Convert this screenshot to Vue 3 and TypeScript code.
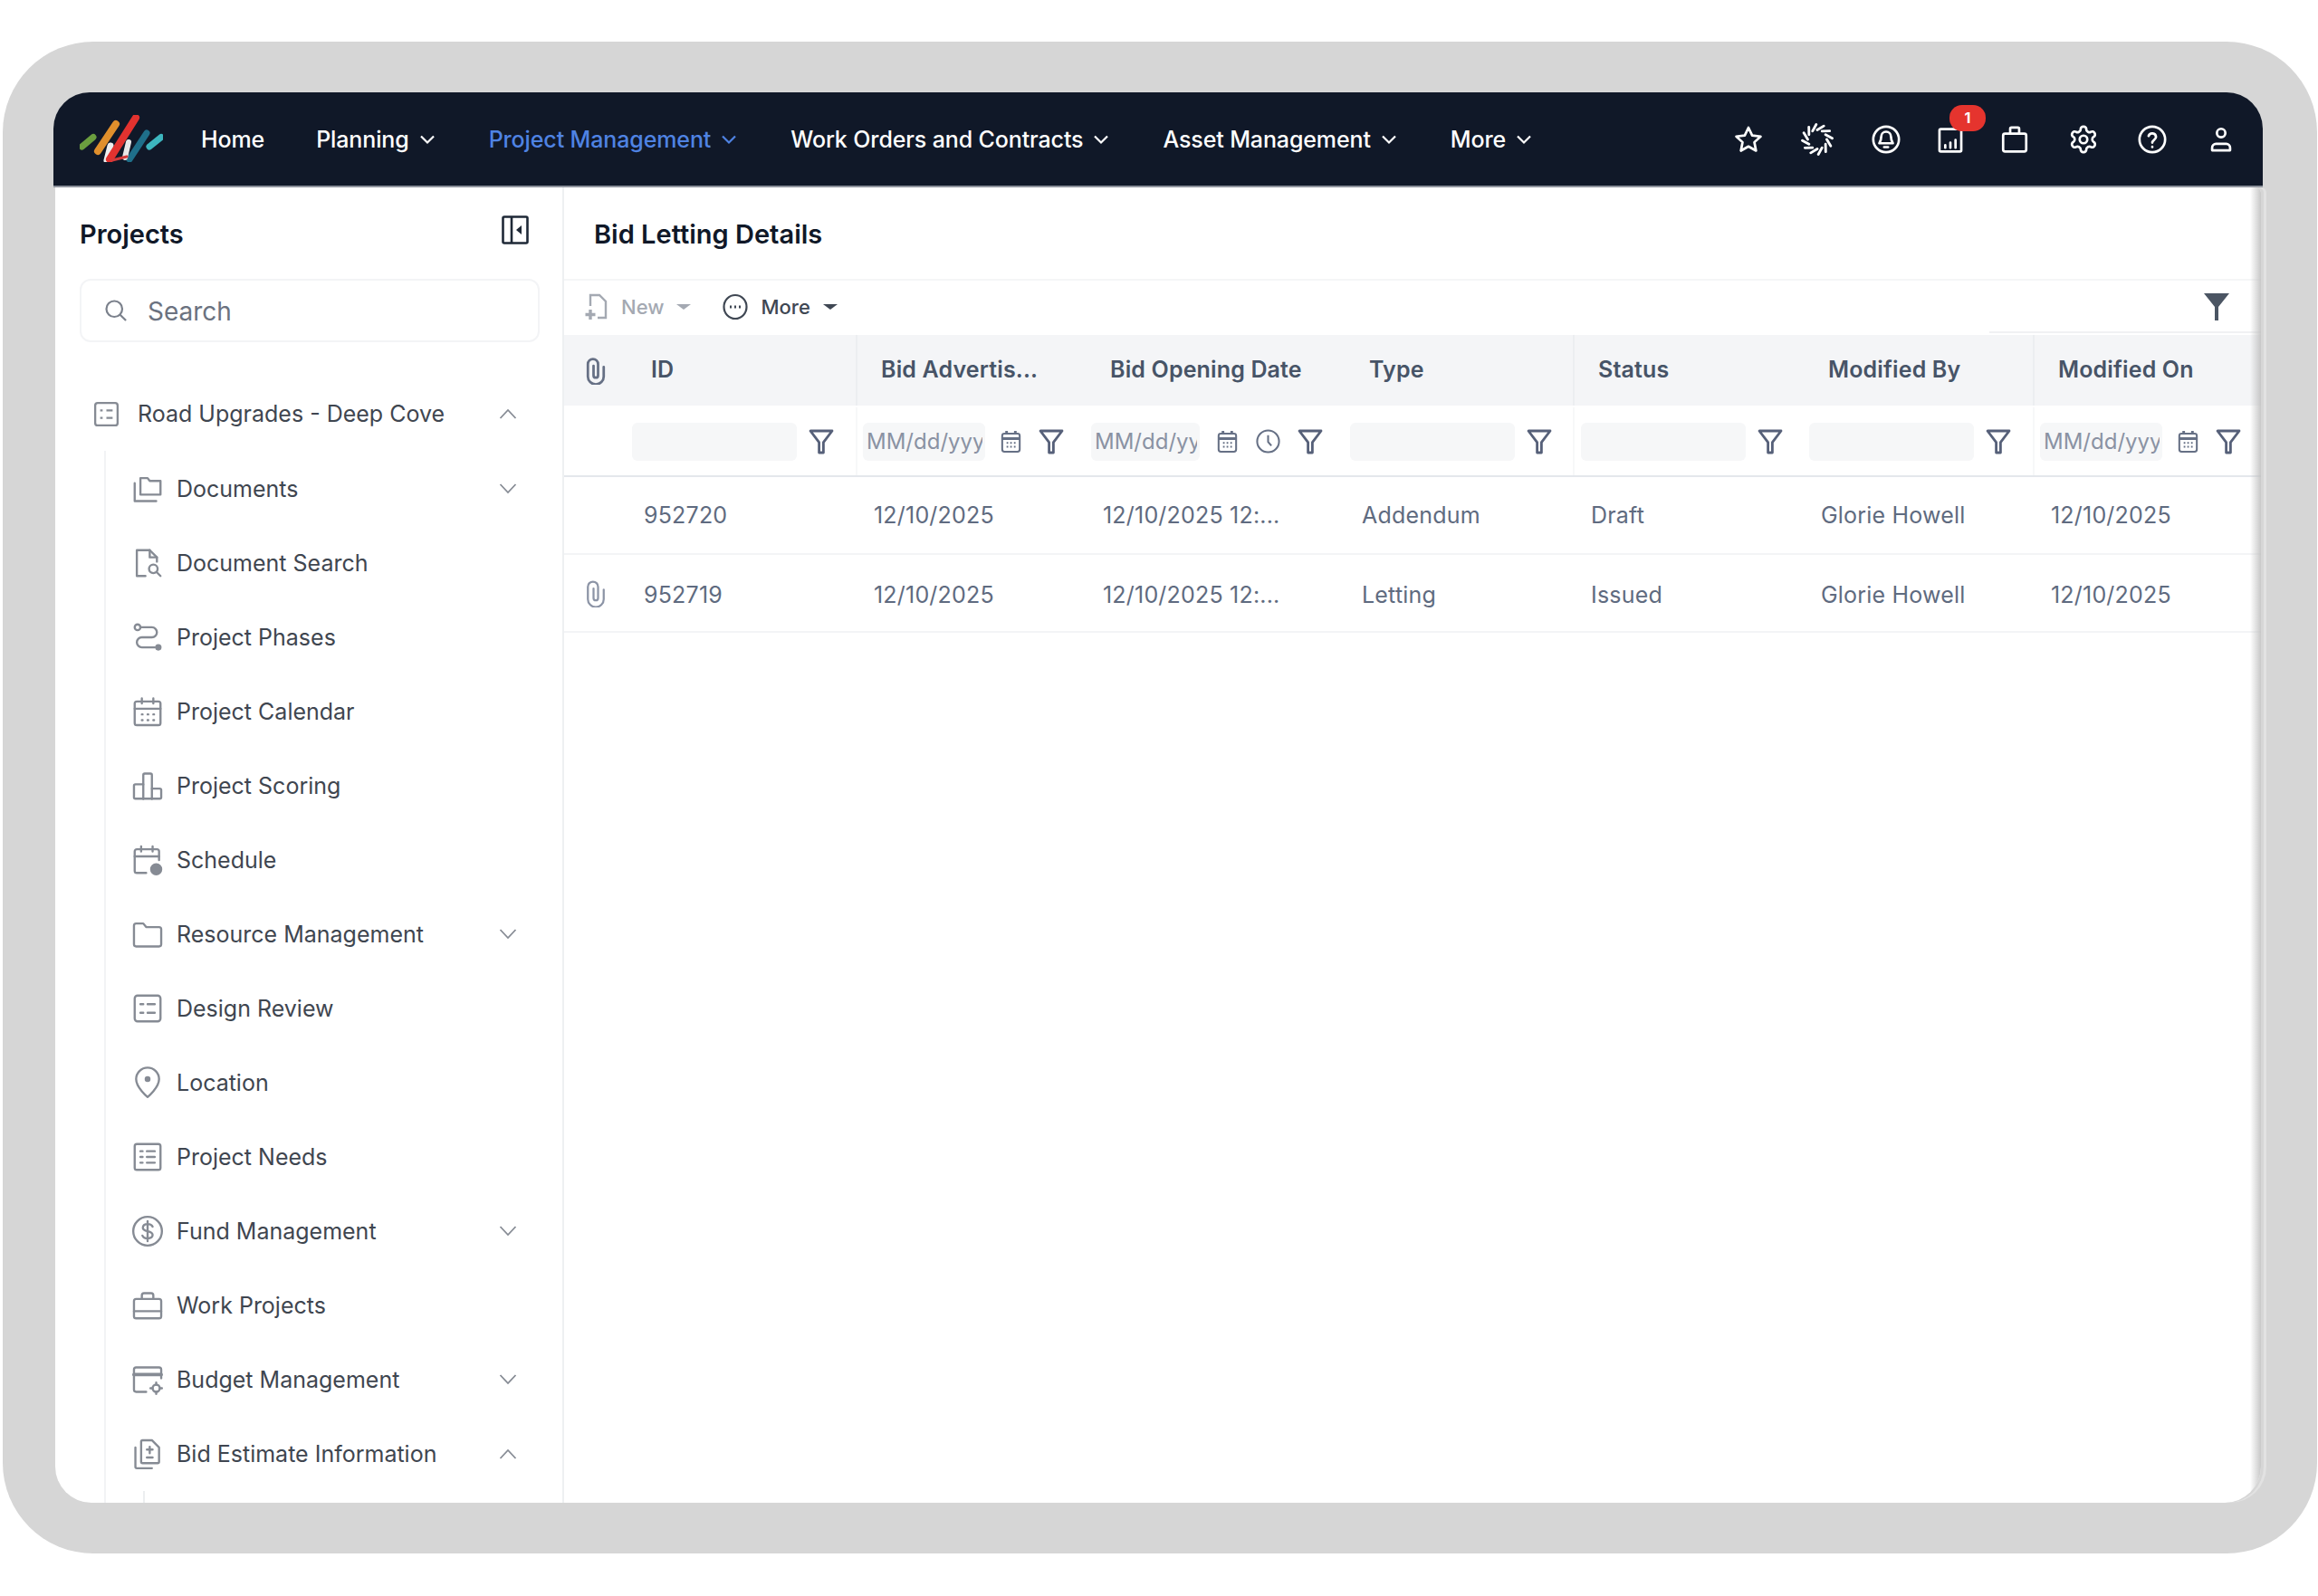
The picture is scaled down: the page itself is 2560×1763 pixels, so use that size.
<script setup lang="ts">
interface MenuItem {
  label: string
  icon: string
  chevron?: 'up' | 'down'
}

interface Column {
  label: string
  kind: 'text' | 'date' | 'datetime'
  sep?: boolean
}

const navItems = [
  { label: 'Home', arrow: false, active: false },
  { label: 'Planning', arrow: true, active: false },
  { label: 'Project Management', arrow: true, active: true },
  { label: 'Work Orders and Contracts', arrow: true, active: false },
  { label: 'Asset Management', arrow: true, active: false },
  { label: 'More', arrow: true, active: false }
]

// pinwheel for the second nav icon
function pinwheel() {
  let d = ''
  for (let i = 0; i < 12; i++) {
    const a = (i * Math.PI) / 6
    const b = a + 0.45
    d += `M${(12 + 7 * Math.cos(a)).toFixed(1)} ${(12 + 7 * Math.sin(a)).toFixed(1)}L${(12 + 11 * Math.cos(b)).toFixed(1)} ${(12 + 11 * Math.sin(b)).toFixed(1)}`
  }
  return `<path d="${d}"/>`
}

const topIcons = [
  { name: 'star', svg: '<path d="M12 2.8l2.9 6.1 6.6.8-4.9 4.5 1.3 6.6-5.9-3.3-5.9 3.3 1.3-6.6-4.9-4.5 6.6-.8z"/>' },
  { name: 'spin', svg: pinwheel() },
  { name: 'bell', svg: '<circle cx="12" cy="12" r="10"/><path d="M12 6a3.800 3.800 0 0 0-3.800 3.800c0 2.700-.8 4-1.500 5.200h10.600c-.7-1.200-1.500-2.500-1.500-5.200A3.800 3.800 0 0 0 12 6z"/><path d="M10.500 18h3"/>' },
  { name: 'report', svg: '<rect x="3.500" y="4" width="17" height="17.500" rx="1"/><path d="M8 18.500v-2M12 18.500v-4M16 18.500v-6"/>' },
  { name: 'bag', svg: '<rect x="3" y="7.500" width="18" height="14" rx="1.500"/><path d="M8.500 7.500V3.800a1 1 0 0 1 1-1h5a1 1 0 0 1 1 1v3.700"/>' },
  { name: 'gear', svg: '<path d="M12.220 2h-.44a2 2 0 0 0-2 2v.18a2 2 0 0 1-1 1.730l-.43.250a2 2 0 0 1-2 0l-.15-.08a2 2 0 0 0-2.730.730l-.22.380a2 2 0 0 0 .730 2.730l.150.100a2 2 0 0 1 1 1.720v.510a2 2 0 0 1-1 1.740l-.15.090a2 2 0 0 0-.730 2.730l.220.380a2 2 0 0 0 2.730.730l.150-.08a2 2 0 0 1 2 0l.430.250a2 2 0 0 1 1 1.730V20a2 2 0 0 0 2 2h.44a2 2 0 0 0 2-2v-.18a2 2 0 0 1 1-1.730l.43-.25a2 2 0 0 1 2 0l.15.08a2 2 0 0 0 2.730-.73l.22-.39a2 2 0 0 0-.73-2.730l-.15-.08a2 2 0 0 1-1-1.740v-.5a2 2 0 0 1 1-1.740l.15-.09a2 2 0 0 0 .73-2.730l-.22-.38a2 2 0 0 0-2.730-.73l-.15.08a2 2 0 0 1-2 0l-.43-.25a2 2 0 0 1-1-1.730V4a2 2 0 0 0-2-2z"/><circle cx="12" cy="12" r="3"/>' },
  { name: 'help', svg: '<circle cx="12" cy="12" r="10"/><path d="M9.100 9.300a3 3 0 0 1 5.800 .8c0 2-2.900 2.400-2.900 4.400"/><path d="M12 17.800v.2"/>' },
  { name: 'user', svg: '<circle cx="12" cy="7" r="3.300"/><path d="M5 20.500v-2a3 3 0 0 1 3-3h8a3 3 0 0 1 3 3v2z"/>' }
]

const menuIcons: Record<string, string> = {
  board: '<rect x="3" y="3" width="18" height="18" rx="2"/><path d="M7 9h2M12 9h5M7 15h2M12 15h5"/>',
  docs: '<path d="M7 16V4.500h5l1.500 2H21V16z"/><path d="M3 8v12.500h15"/>',
  docSearch: '<path d="M10.500 21H4.500V3h9l5 5v3"/><path d="M13.500 3v5h5"/><circle cx="16" cy="16" r="3"/><path d="M18.300 18.300L21 21"/>',
  phases: '<circle cx="5" cy="5" r="2"/><path d="M7 5h8a3.500 3.500 0 0 1 0 7H8a3.500 3.500 0 0 0 0 7h9"/><circle cx="19.500" cy="19" r="1.500" fill="currentColor"/>',
  calendar: '<rect x="3" y="5" width="18" height="16.500" rx="1.500"/><path d="M3 10h18M8 2.800v3.500M16 2.800v3.500M8 14h.5M12 14h.5M16 14h.5M8 18h.5M12 18h.5M16 18h.5"/>',
  scoring: '<path d="M9 21V4.500a1 1 0 0 1 1-1h4a1 1 0 0 1 1 1V21"/><path d="M9 21H3.500a1 1 0 0 1-1-1v-8a1 1 0 0 1 1-1H9"/><path d="M15 21h5.500a1 1 0 0 0 1-1v-5a1 1 0 0 0-1-1H15"/><path d="M9 21h6"/>',
  schedule: '<path d="M11 21H4.500A1.500 1.500 0 0 1 3 19.500V6a1.500 1.500 0 0 1 1.500-1.500h14A1.500 1.500 0 0 1 20 6v6"/><path d="M3 9.500h17M7.500 2.500v3.500M15.500 2.500v3.500"/><circle cx="18" cy="18.500" r="3.500" fill="currentColor"/>',
  folder: '<path d="M2.500 6a1.500 1.500 0 0 1 1.500-1.500h5l2 2.500h9a1.500 1.500 0 0 1 1.500 1.500V19a1.500 1.500 0 0 1-1.500 1.500H4A1.500 1.500 0 0 1 2.500 19z"/>',
  location: '<path d="M12 22s-8-6.500-8-12.500a8 8 0 0 1 16 0C20 15.500 12 22 12 22z"/><circle cx="12" cy="9.500" r="1.300" fill="currentColor"/>',
  needs: '<rect x="3" y="3" width="18" height="18" rx="1.500"/><path d="M7 8h1.500M11.500 8H17M7 12h1.500M11.500 12H17M7 16h1.500M11.500 16H17"/>',
  fund: '<circle cx="12" cy="12" r="10"/><path d="M15.500 8.800C15 7.700 13.800 7 12.200 7 10 7 8.700 8.100 8.700 9.600c0 3.500 6.800 1.400 6.800 5 0 1.500-1.400 2.500-3.500 2.500-1.800 0-3.100-.8-3.600-2M12 5v14"/>',
  work: '<rect x="2.500" y="7.500" width="19" height="13.500" rx="1.500"/><path d="M8 7.500V5a1.500 1.500 0 0 1 1.500-1.500h5A1.500 1.500 0 0 1 16 5v2.500M2.500 16h19"/>',
  budget: '<path d="M11 20.500H4A1.500 1.500 0 0 1 2.500 19V5A1.500 1.500 0 0 1 4 3.500h16A1.500 1.500 0 0 1 21.500 5v6"/><path d="M2.500 8.500h19" stroke-width="2.400"/><circle cx="18" cy="18" r="2.500"/><path d="M18 14v1.500M18 20.500V22M14 18h1.500M20.500 18H22"/>',
  estimate: '<path d="M8.500 2.500H15l5 5v10a1 1 0 0 1-1 1H8.500a1 1 0 0 1-1-1v-14a1 1 0 0 1 1-1z"/><path d="M3.500 7.500v13.500a1 1 0 0 0 1 1H15"/><path d="M13.500 7v4.500M11.500 9h4M11.500 14.500h4"/>'
}

const menu: MenuItem[] = [
  { label: 'Documents', icon: 'docs', chevron: 'down' },
  { label: 'Document Search', icon: 'docSearch' },
  { label: 'Project Phases', icon: 'phases' },
  { label: 'Project Calendar', icon: 'calendar' },
  { label: 'Project Scoring', icon: 'scoring' },
  { label: 'Schedule', icon: 'schedule' },
  { label: 'Resource Management', icon: 'folder', chevron: 'down' },
  { label: 'Design Review', icon: 'board' },
  { label: 'Location', icon: 'location' },
  { label: 'Project Needs', icon: 'needs' },
  { label: 'Fund Management', icon: 'fund', chevron: 'down' },
  { label: 'Work Projects', icon: 'work' },
  { label: 'Budget Management', icon: 'budget', chevron: 'down' },
  { label: 'Bid Estimate Information', icon: 'estimate', chevron: 'up' }
]

const columns: Column[] = [
  { label: 'ID', kind: 'text' },
  { label: 'Bid Advertis...', kind: 'date', sep: true },
  { label: 'Bid Opening Date', kind: 'datetime' },
  { label: 'Type', kind: 'text' },
  { label: 'Status', kind: 'text', sep: true },
  { label: 'Modified By', kind: 'text' },
  { label: 'Modified On', kind: 'date', sep: true }
]

const rows = [
  { attach: false, cells: ['952720', '12/10/2025', '12/10/2025 12:...', 'Addendum', 'Draft', 'Glorie Howell', '12/10/2025'] },
  { attach: true, cells: ['952719', '12/10/2025', '12/10/2025 12:...', 'Letting', 'Issued', 'Glorie Howell', '12/10/2025'] }
]

const paperclip = '<path d="M19 9v8.500a7 7 0 0 1-14 0V6.500a4.500 4.500 0 0 1 9 0v10a2 2 0 0 1-4 0V8"/>'
const funnel = '<path d="M3 3h18l-7.200 9.500V21h-3.600v-8.500z"/>'
const calIcon = '<rect x="4" y="5" width="16" height="16.500" rx="2"/><path d="M4 9.500h16M8 2.500v3M16 2.500v3" stroke-width="2.400"/><path d="M8 13.500h1.500M11.300 13.500h1.500M14.700 13.500h1.500M8 17h1.500M11.300 17h1.500M14.700 17h1.500"/>'
const clockIcon = '<circle cx="12" cy="12" r="10"/><path d="M12 6.500v6l3 3.500"/>'
</script>

<template>
  <div class="frame">
    <div class="screen">
      <header class="nav">
        <svg class="logo" viewBox="0 0 92 52" fill="none" stroke-linecap="round">
          <path d="M2.500 35L15 24.500" stroke="#6b9e3f" stroke-width="7" />
          <path d="M20 40L40 10" stroke="#e08f2c" stroke-width="8" />
          <path d="M30 50L34 34" stroke="#eeeeee" stroke-width="7" />
          <path d="M55 49L74 20" stroke="#1f6f8a" stroke-width="7" />
          <path d="M50 47L54 30" stroke="#e8e8e8" stroke-width="6" />
          <path d="M33 49L62 3" stroke="#e2322f" stroke-width="8" />
          <path d="M36 50L52 46" stroke="#d23a3a" stroke-width="3" />
          <path d="M77 35L90 24.500" stroke="#3db6bf" stroke-width="7" />
        </svg>
        <nav class="nav-links">
          <a v-for="item in navItems" :key="item.label" class="nav-link" :class="{ active: item.active }">
            {{ item.label }}
            <svg v-if="item.arrow" class="nav-arrow" viewBox="0 0 18 18" fill="none" stroke="currentColor" stroke-width="2.200">
              <path d="M2 5.500l7 7 7-7" />
            </svg>
          </a>
        </nav>
        <div class="nav-icons">
          <span v-for="ic in topIcons" :key="ic.name" class="nav-icon" :class="'ic-' + ic.name">
            <svg viewBox="0 0 24 24" fill="none" stroke="currentColor" stroke-width="1.900" stroke-linejoin="round" stroke-linecap="round" v-html="ic.svg"></svg>
            <span v-if="ic.name === 'report'" class="badge">1</span>
          </span>
        </div>
      </header>

      <div class="body">
        <aside class="sidebar">
          <div class="side-head">
            <h2>Projects</h2>
            <svg class="collapse" viewBox="0 0 30 32" fill="none" stroke="#1f2937" stroke-width="2.600">
              <rect x="1.500" y="1.500" width="27" height="29" rx="1.500" />
              <path d="M11 1.500v29" />
              <path d="M22 11v10l-6-5z" fill="#1f2937" stroke="none" />
            </svg>
          </div>
          <label class="search">
            <svg viewBox="0 0 24 24" fill="none" stroke="#7b818c" stroke-width="1.900">
              <circle cx="10.500" cy="10.500" r="7.500" />
              <path d="M16 16l5.500 5.500" />
            </svg>
            <input type="text" placeholder="Search" />
          </label>

          <div class="root-row">
            <svg class="m-icon root-icon" viewBox="0 0 24 24" fill="none" stroke="currentColor" stroke-width="1.700" v-html="menuIcons.board"></svg>
            <span>Road Upgrades - Deep Cove</span>
            <svg class="chev" viewBox="0 0 20 12" fill="none" stroke="currentColor" stroke-width="1.800"><path d="M1.500 11L10 2l8.500 9" /></svg>
          </div>
          <div class="sub-list">
            <div v-for="m in menu" :key="m.label" class="sub-row">
              <span class="m-box">
                <svg class="m-icon" viewBox="0 0 24 24" fill="none" stroke="currentColor" stroke-width="1.500" stroke-linejoin="round" stroke-linecap="round" v-html="menuIcons[m.icon]"></svg>
              </span>
              <span>{{ m.label }}</span>
              <svg v-if="m.chevron" class="chev" viewBox="0 0 20 12" fill="none" stroke="currentColor" stroke-width="1.800">
                <path :d="m.chevron === 'up' ? 'M1.500 11L10 2l8.500 9' : 'M1.500 1L10 10l8.500-9'" />
              </svg>
            </div>
            <div class="sub-sub"></div>
          </div>
        </aside>

        <main class="main">
          <h1 class="title">Bid Letting Details</h1>
          <div class="toolbar">
            <button class="tool disabled">
              <svg viewBox="0 0 28 32" fill="none" stroke="currentColor" stroke-width="2.400">
                <path d="M8 15V3h10l7 7v18h-9" />
                <path d="M8 19v11M2.500 24.500h11" stroke-width="3.400" />
              </svg>
              New
              <i class="caret"></i>
            </button>
            <button class="tool">
              <svg viewBox="0 0 28 32" fill="none" stroke="currentColor" stroke-width="2.200">
                <ellipse cx="14" cy="16" rx="12.500" ry="13" />
                <path d="M8 16h2M13 16h2M18 16h2" stroke-width="2.800" />
              </svg>
              More
              <i class="caret"></i>
            </button>
            <svg class="tool-funnel" viewBox="0 0 28 30" fill="#4b5563"><path d="M0 0h28L16 15v15h-4V15z" /></svg>
          </div>

          <div class="t-row t-head">
            <div class="t-attach">
              <svg viewBox="0 0 24 24" fill="none" stroke="#667085" stroke-width="2.200" stroke-linecap="round" v-html="paperclip"></svg>
            </div>
            <div v-for="c in columns" :key="c.label" class="h-cell" :class="{ sep: c.sep }">{{ c.label }}</div>
          </div>

          <div class="t-row t-filter">
            <div></div>
            <div v-for="c in columns" :key="c.label" class="f-cell" :class="['f-' + c.kind, { sep: c.sep }]">
              <input type="text" :placeholder="c.kind === 'text' ? '' : 'MM/dd/yyyy'" />
              <svg v-if="c.kind !== 'text'" class="f-icon" viewBox="0 0 24 24" fill="none" stroke="#667085" stroke-width="1.700" v-html="calIcon"></svg>
              <svg v-if="c.kind === 'datetime'" class="f-icon" viewBox="0 0 24 24" fill="none" stroke="#667085" stroke-width="1.700" v-html="clockIcon"></svg>
              <svg class="f-funnel" viewBox="0 0 24 24" fill="none" stroke="#566079" stroke-width="2.100" stroke-linejoin="round" v-html="funnel"></svg>
            </div>
          </div>

          <div v-for="r in rows" :key="r.cells[0]" class="t-row t-data">
            <div class="t-attach">
              <svg v-if="r.attach" viewBox="0 0 24 24" fill="none" stroke="#8c94a6" stroke-width="1.800" stroke-linecap="round" v-html="paperclip"></svg>
            </div>
            <div v-for="(cell, i) in r.cells" :key="i" class="d-cell">{{ cell }}</div>
          </div>
        </main>
      </div>
    </div>
  </div>
</template>

<style scoped>
.frame {
  box-sizing: border-box;
  width: 2556px;
  height: 1670px;
  margin: 46px 0 47px 3px;
  padding: 56px 60px 56px 56px;
  background: #d6d6d6;
  border-radius: 100px;
  font-family: Inter, "Liberation Sans", sans-serif;
}

.screen {
  height: 100%;
  display: flex;
  flex-direction: column;
}

.nav {
  flex: none;
  box-sizing: border-box;
  height: 105px;
  padding: 0 8px 2px 29px;
  display: flex;
  align-items: center;
  background: #101828;
  border-bottom: 2px solid #8d929c;
  border-radius: 40px 40px 0 0;
  color: #fff;
}

.logo {
  width: 92px;
  height: 52px;
  flex: none;
  margin-right: 42px;
}

.nav-links {
  display: flex;
  align-items: center;
  gap: 59px;
  margin-top: 3px;
}

.nav-link {
  display: flex;
  align-items: center;
  gap: 11px;
  font-size: 25px;
  font-weight: 500;
  letter-spacing: -0.12px;
  white-space: nowrap;
}

.nav-link:first-child {
  margin-right: -2px;
}

.nav-link.active {
  color: #4f83e3;
}

.nav-arrow {
  width: 18px;
  height: 18px;
}

.nav-icons {
  margin-left: auto;
  display: flex;
  align-items: center;
  margin-top: 2px;
}

.nav-icon {
  position: relative;
  width: 76px;
  display: flex;
  justify-content: center;
}

.nav-icon svg {
  width: 34px;
  height: 34px;
}

.nav-icon.ic-report {
  width: 66px;
}

.nav-icon.ic-spin svg {
  width: 36px;
  height: 36px;
}

.badge {
  position: absolute;
  left: 32px;
  top: -21px;
  width: 40px;
  height: 29px;
  border-radius: 14px;
  background: #e5342e;
  color: #fff;
  font-size: 16px;
  font-weight: 700;
  line-height: 29px;
  text-align: center;
}

.body {
  flex: 1;
  min-height: 0;
  position: relative;
  display: flex;
  margin: 0 2px 0 2px;
  background: #fff;
  border-radius: 0 6px 40px 40px;
  overflow: hidden;
  box-shadow: 3px 0 0 #d6d6d6, 6px 0 0 #e2e2e2;
}

.body::after {
  content: "";
  position: absolute;
  top: 0;
  right: 0;
  bottom: 0;
  width: 12px;
  background: linear-gradient(to right, rgba(190, 190, 190, 0), rgba(190, 190, 190, 0.85));
}

.sidebar {
  flex: none;
  box-sizing: border-box;
  width: 562px;
  padding-left: 27px;
  border-right: 2px solid #eef0f2;
  overflow: hidden;
}

.side-head {
  height: 101px;
  display: flex;
  align-items: center;
  justify-content: space-between;
  padding-right: 37px;
}

.side-head h2 {
  margin: 2px 0 0;
  font-size: 29px;
  font-weight: 600;
  color: #101828;
}

.collapse {
  width: 30px;
  height: 32px;
  margin-bottom: 8px;
}

.search {
  box-sizing: border-box;
  height: 70px;
  margin-right: 25px;
  padding-left: 24px;
  display: flex;
  align-items: center;
  gap: 21px;
  border: 2px solid #f3f4f6;
  border-radius: 12px;
}

.search svg {
  width: 28px;
  height: 28px;
}

.search input {
  flex: 1;
  min-width: 0;
  border: 0;
  outline: 0;
  padding: 2px 0 0;
  font: 400 28px Inter, "Liberation Sans", sans-serif;
}

.search input::placeholder {
  color: #6b7280;
  opacity: 1;
}

.root-row,
.sub-row {
  height: 82px;
  display: flex;
  align-items: center;
  font-size: 25px;
  color: #3f4650;
  white-space: nowrap;
}

.root-row {
  margin-top: 38px;
  padding-left: 13px;
  gap: 18px;
}

.m-icon {
  color: #868b94;
  width: 38px;
  height: 38px;
  flex: none;
}

.root-icon {
  width: 33px;
  height: 33px;
}

.chev {
  width: 20px;
  height: 12px;
  margin-left: auto;
  margin-right: 50px;
  color: #868b94;
  flex: none;
}

.sub-list {
  margin-left: 27px;
  padding: 1px 0 0 27px;
  border-left: 2px solid #f2f3f5;
}

.sub-row {
  gap: 13px;
}

.m-box {
  width: 38px;
  height: 38px;
  flex: none;
}

.sub-sub {
  width: 0;
  height: 80px;
  margin-left: 14px;
  border-left: 2px solid #eceef0;
}

.main {
  flex: 1;
  min-width: 0;
}

.title {
  box-sizing: border-box;
  height: 101px;
  margin: 0;
  padding: 2px 0 0 33px;
  display: flex;
  align-items: center;
  font-size: 29px;
  font-weight: 600;
  color: #101828;
}

.toolbar {
  position: relative;
  box-sizing: border-box;
  height: 62px;
  padding: 0 35px 2px 21px;
  display: flex;
  align-items: center;
  gap: 35px;
  border-top: 2px solid #f5f6f7;
}

.toolbar::after {
  content: "";
  position: absolute;
  right: 0;
  bottom: 2px;
  width: 300px;
  height: 2px;
  background: #f0f1f3;
}

.tool {
  display: flex;
  align-items: center;
  gap: 14px;
  padding: 0;
  border: 0;
  background: none;
  font: 500 22px Inter, "Liberation Sans", sans-serif;
  color: #3f4753;
}

.tool svg {
  width: 28px;
  height: 32px;
}

.tool.disabled {
  color: #a4a9b2;
}

.caret {
  width: 0;
  height: 0;
  border-left: 8px solid transparent;
  border-right: 8px solid transparent;
  border-top: 6px solid currentColor;
}

.tool-funnel {
  width: 28px;
  height: 30px;
  margin-left: auto;
}

.t-row {
  display: grid;
  grid-template-columns: 68px 254px 253px 286px 253px 254px 254px 252px;
}

.t-head {
  height: 78px;
  background: #f4f5f7;
  align-items: stretch;
}

.t-attach {
  display: flex;
  align-items: center;
  justify-content: flex-start;
  padding-left: 20px;
}

.t-attach svg {
  width: 30px;
  height: 32px;
}

.h-cell {
  display: flex;
  align-items: center;
  padding-left: 28px;
  padding-bottom: 3px;
  font-size: 25px;
  font-weight: 600;
  letter-spacing: 0.15px;
  color: #475467;
  white-space: nowrap;
}

.h-cell.sep {
  padding-left: 26px;
  border-left: 2px solid #eceef1;
}

.f-cell.sep {
  border-left: 2px solid #f7f8f9;
}

.t-filter {
  box-sizing: border-box;
  height: 79px;
  padding-top: 2px;
  border-bottom: 2px solid #e4e7ec;
}

.f-cell {
  display: flex;
  align-items: center;
  padding-left: 7px;
  gap: 11px;
}

.f-cell.f-date {
  padding-left: 6px;
  gap: 14px;
}

.f-cell.f-datetime {
  gap: 16px;
}

.f-cell input {
  box-sizing: border-box;
  flex: none;
  width: 182px;
  height: 42px;
  margin: 0;
  padding: 0 3px 0 4px;
  border: 0;
  border-radius: 6px;
  background: #f6f7f8;
  outline: 0;
  font: 400 24px Inter, "Liberation Sans", sans-serif;
}

.f-cell input::placeholder {
  color: #8a92a3;
  opacity: 1;
}

.f-date input {
  width: 135px;
}

.f-datetime input {
  width: 120px;
}

.f-icon {
  width: 29px;
  height: 29px;
  flex: none;
}

.f-funnel {
  width: 32px;
  height: 32px;
  flex: none;
}

.t-data {
  box-sizing: border-box;
  height: 86px;
  border-bottom: 2px solid #f3f4f6;
}

.d-cell {
  display: flex;
  align-items: center;
  padding-left: 20px;
  font-size: 25px;
  letter-spacing: 0.2px;
  color: #5f6b80;
  white-space: nowrap;
}

.t-data:last-child .d-cell {
  padding-top: 4px;
}
</style>

<style>
body {
  background: #fff;
}
</style>
